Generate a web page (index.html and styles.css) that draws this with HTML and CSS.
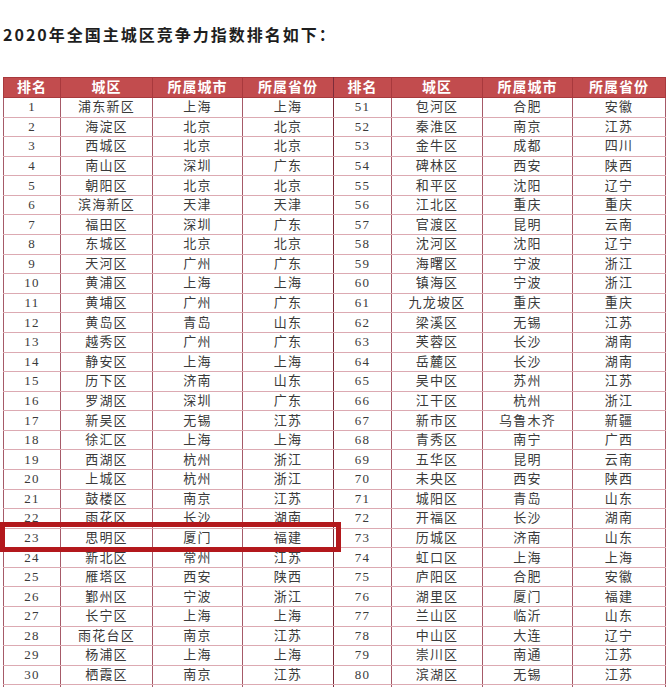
FILE: index.html
```html
<!DOCTYPE html>
<html lang="zh">
<head>
<meta charset="utf-8">
<title>2020年全国主城区竞争力指数排名</title>
<link rel="stylesheet" href="styles.css">
</head>
<body>
<div class="page">
  <h1 class="title">2020年全国主城区竞争力指数排名如下：</h1>
  <table class="rank">
    <colgroup>
      <col class="c-rank"><col class="c-dist"><col class="c-city"><col class="c-prov">
      <col class="c-rank2"><col class="c-dist2"><col class="c-city2"><col class="c-prov2">
    </colgroup>
    <thead>
      <tr><th>排名</th><th>城区</th><th>所属城市</th><th class="sep">所属省份</th><th>排名</th><th>城区</th><th>所属城市</th><th>所属省份</th></tr>
    </thead>
    <tbody>
      <tr><td>1</td><td>浦东新区</td><td>上海</td><td class="sep">上海</td><td>51</td><td>包河区</td><td>合肥</td><td>安徽</td></tr>
      <tr><td>2</td><td>海淀区</td><td>北京</td><td class="sep">北京</td><td>52</td><td>秦淮区</td><td>南京</td><td>江苏</td></tr>
      <tr><td>3</td><td>西城区</td><td>北京</td><td class="sep">北京</td><td>53</td><td>金牛区</td><td>成都</td><td>四川</td></tr>
      <tr><td>4</td><td>南山区</td><td>深圳</td><td class="sep">广东</td><td>54</td><td>碑林区</td><td>西安</td><td>陕西</td></tr>
      <tr><td>5</td><td>朝阳区</td><td>北京</td><td class="sep">北京</td><td>55</td><td>和平区</td><td>沈阳</td><td>辽宁</td></tr>
      <tr><td>6</td><td>滨海新区</td><td>天津</td><td class="sep">天津</td><td>56</td><td>江北区</td><td>重庆</td><td>重庆</td></tr>
      <tr><td>7</td><td>福田区</td><td>深圳</td><td class="sep">广东</td><td>57</td><td>官渡区</td><td>昆明</td><td>云南</td></tr>
      <tr><td>8</td><td>东城区</td><td>北京</td><td class="sep">北京</td><td>58</td><td>沈河区</td><td>沈阳</td><td>辽宁</td></tr>
      <tr><td>9</td><td>天河区</td><td>广州</td><td class="sep">广东</td><td>59</td><td>海曙区</td><td>宁波</td><td>浙江</td></tr>
      <tr><td>10</td><td>黄浦区</td><td>上海</td><td class="sep">上海</td><td>60</td><td>镇海区</td><td>宁波</td><td>浙江</td></tr>
      <tr><td>11</td><td>黄埔区</td><td>广州</td><td class="sep">广东</td><td>61</td><td>九龙坡区</td><td>重庆</td><td>重庆</td></tr>
      <tr><td>12</td><td>黄岛区</td><td>青岛</td><td class="sep">山东</td><td>62</td><td>梁溪区</td><td>无锡</td><td>江苏</td></tr>
      <tr><td>13</td><td>越秀区</td><td>广州</td><td class="sep">广东</td><td>63</td><td>芙蓉区</td><td>长沙</td><td>湖南</td></tr>
      <tr><td>14</td><td>静安区</td><td>上海</td><td class="sep">上海</td><td>64</td><td>岳麓区</td><td>长沙</td><td>湖南</td></tr>
      <tr><td>15</td><td>历下区</td><td>济南</td><td class="sep">山东</td><td>65</td><td>吴中区</td><td>苏州</td><td>江苏</td></tr>
      <tr><td>16</td><td>罗湖区</td><td>深圳</td><td class="sep">广东</td><td>66</td><td>江干区</td><td>杭州</td><td>浙江</td></tr>
      <tr><td>17</td><td>新吴区</td><td>无锡</td><td class="sep">江苏</td><td>67</td><td>新市区</td><td>乌鲁木齐</td><td>新疆</td></tr>
      <tr><td>18</td><td>徐汇区</td><td>上海</td><td class="sep">上海</td><td>68</td><td>青秀区</td><td>南宁</td><td>广西</td></tr>
      <tr><td>19</td><td>西湖区</td><td>杭州</td><td class="sep">浙江</td><td>69</td><td>五华区</td><td>昆明</td><td>云南</td></tr>
      <tr><td>20</td><td>上城区</td><td>杭州</td><td class="sep">浙江</td><td>70</td><td>未央区</td><td>西安</td><td>陕西</td></tr>
      <tr><td>21</td><td>鼓楼区</td><td>南京</td><td class="sep">江苏</td><td>71</td><td>城阳区</td><td>青岛</td><td>山东</td></tr>
      <tr><td>22</td><td>雨花区</td><td>长沙</td><td class="sep">湖南</td><td>72</td><td>开福区</td><td>长沙</td><td>湖南</td></tr>
      <tr><td>23</td><td>思明区</td><td>厦门</td><td class="sep">福建</td><td>73</td><td>历城区</td><td>济南</td><td>山东</td></tr>
      <tr><td>24</td><td>新北区</td><td>常州</td><td class="sep">江苏</td><td>74</td><td>虹口区</td><td>上海</td><td>上海</td></tr>
      <tr><td>25</td><td>雁塔区</td><td>西安</td><td class="sep">陕西</td><td>75</td><td>庐阳区</td><td>合肥</td><td>安徽</td></tr>
      <tr><td>26</td><td>鄞州区</td><td>宁波</td><td class="sep">浙江</td><td>76</td><td>湖里区</td><td>厦门</td><td>福建</td></tr>
      <tr><td>27</td><td>长宁区</td><td>上海</td><td class="sep">上海</td><td>77</td><td>兰山区</td><td>临沂</td><td>山东</td></tr>
      <tr><td>28</td><td>雨花台区</td><td>南京</td><td class="sep">江苏</td><td>78</td><td>中山区</td><td>大连</td><td>辽宁</td></tr>
      <tr><td>29</td><td>杨浦区</td><td>上海</td><td class="sep">上海</td><td>79</td><td>崇川区</td><td>南通</td><td>江苏</td></tr>
      <tr><td>30</td><td>栖霞区</td><td>南京</td><td class="sep">江苏</td><td>80</td><td>滨湖区</td><td>无锡</td><td>江苏</td></tr>
      <tr class="stub"><td></td><td></td><td></td><td class="sep"></td><td></td><td></td><td></td><td></td></tr>
    </tbody>
  </table>
  <div class="highlight"></div>
</div>
</body>
</html>
```
FILE: styles.css
```css
html, body {
  margin: 0;
  padding: 0;
  background: #ffffff;
}
.page {
  position: relative;
  padding: 23px 0 0 3px;
}
.title {
  margin: 0;
  height: 22px;
  font-family: "Noto Sans CJK SC", "Liberation Sans", sans-serif;
  font-size: 16px;
  line-height: 22px;
  font-weight: 700;
  letter-spacing: 2px;
  color: #1e1e1e;
}
.rank {
  margin-top: 32px;
  width: 662px;
  table-layout: fixed;
  border-collapse: collapse;
  font-family: "Liberation Serif", "Noto Sans CJK SC", serif;
  color: #3a3a3a;
}
.c-rank { width: 57px; }
.c-rank2 { width: 58px; }
.c-dist { width: 92px; }
.c-dist2 { width: 91px; }
.c-city, .c-city2 { width: 90px; }
.c-prov { width: 91px; }
.c-prov2 { width: 93px; }
.rank th {
  height: 19px;
  padding: 0;
  background: #c24c4e;
  color: #ffffff;
  font-family: "Liberation Serif", "Noto Sans CJK SC", serif;
  font-size: 14px;
  font-weight: 700;
  letter-spacing: 1px;
  line-height: 17px;
  text-align: center;
  border: 1px solid #a8393d;
}
.rank td {
  height: 18.58px;
  padding: 0;
  font-size: 13px;
  line-height: 16px;
  letter-spacing: 1.2px;
  text-align: center;
  border-left: 1px solid #a65a68;
  border-right: 1px solid #a65a68;
  border-top: 1px solid #dcaab2;
  border-bottom: 1px solid #dcaab2;
  white-space: nowrap;
}
.rank td.sep, .rank th.sep {
  border-right: 1px solid #7c2c3a;
}
.highlight {
  position: absolute;
  left: 0;
  top: 522px;
  width: 341px;
  height: 30px;
  box-sizing: border-box;
  border: 5px solid #b3181c;
}
```
